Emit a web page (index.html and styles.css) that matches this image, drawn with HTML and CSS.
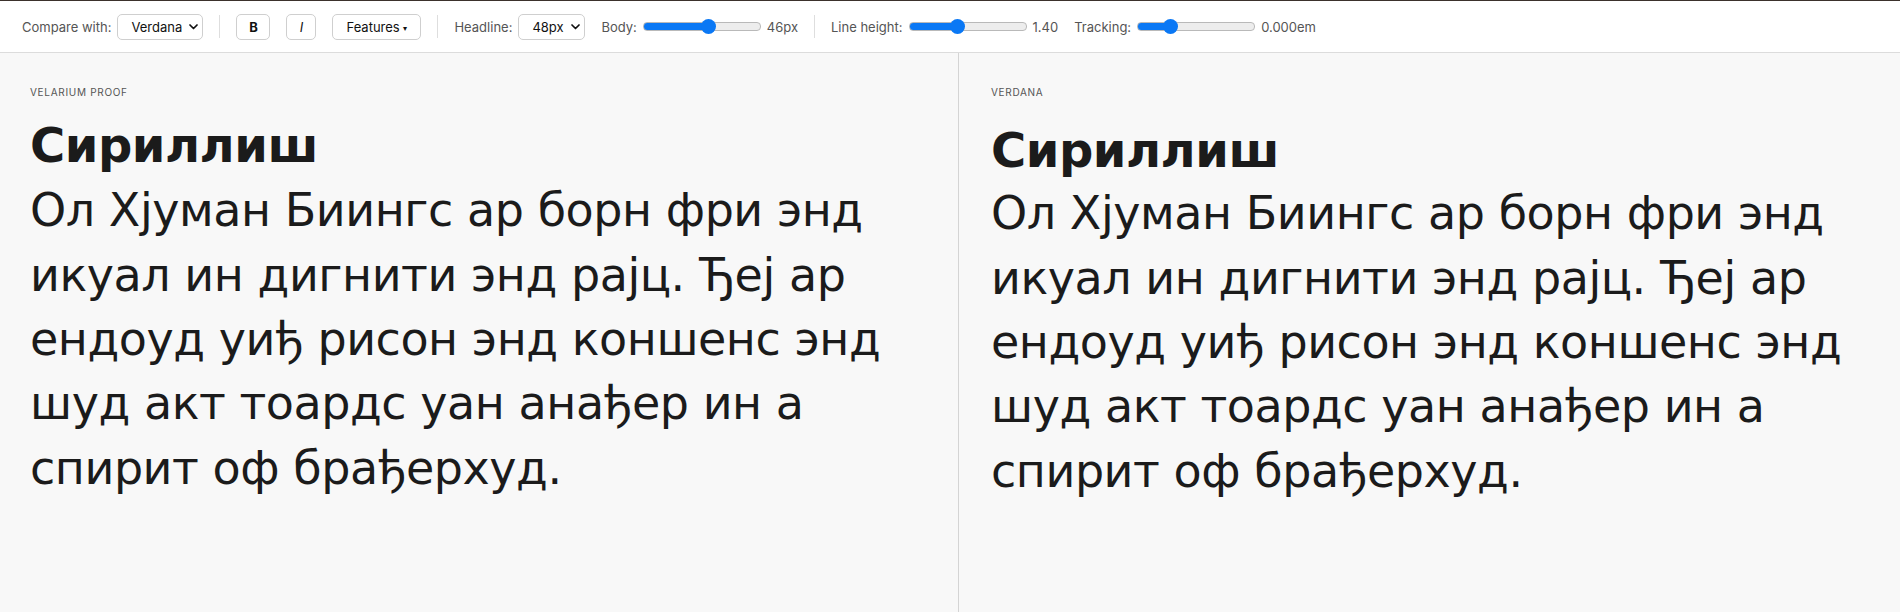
FILE: index.html
```html
<!DOCTYPE html>
<html lang="en">

<head>
    <meta charset="UTF-8">
    <meta name="viewport" content="width=device-width, initial-scale=1.0">
    <title>Velarium proof</title>
    <link rel="stylesheet" href="styles.css">
</head>

<body>
    <div class="toolbar">
        <label class="field">
            <span>Compare with:</span>
            <span class="select-wrap select-font">
                <select class="select">
                    <option>Verdana</option>
                </select>
                <svg class="chevron" width="9" height="6" viewBox="0 0 9 6"><polyline points="1,1 4.5,4.5 8,1" /></svg>
            </span>
        </label>
        <span class="divider"></span>
        <button class="btn btn-bold">B</button>
        <button class="btn btn-italic">I</button>
        <button class="btn btn-features">Features <span class="caret">&#9662;</span></button>
        <span class="divider"></span>
        <label class="field">
            <span>Headline:</span>
            <span class="select-wrap select-size">
                <select class="select">
                    <option>48px</option>
                </select>
                <svg class="chevron" width="9" height="6" viewBox="0 0 9 6"><polyline points="1,1 4.5,4.5 8,1" /></svg>
            </span>
        </label>
        <label class="field">
            <span>Body:</span>
            <input class="range" type="range" min="12" max="72" value="46" style="--fill: 60%">
            <span class="value">46px</span>
        </label>
        <span class="divider"></span>
        <label class="field">
            <span>Line height:</span>
            <input class="range" type="range" min="1" max="2" step="0.05" value="1.4" style="--fill: 40%">
            <span class="value">1.40</span>
        </label>
        <label class="field">
            <span>Tracking:</span>
            <input class="range" type="range" min="-0.05" max="0.15" step="0.005" value="0" style="--fill: 29%">
            <span class="value">0.000em</span>
        </label>
    </div>

    <main class="panes">
        <section class="pane">
            <div class="pane-label">Velarium Proof</div>
            <h1 class="headline">Сириллиш</h1>
            <p class="body-text">Ол Хјуман Биингс ар борн фри энд икуал ин дигнити энд рајц. Ђеј ар ендоуд уиђ рисон энд коншенс энд шуд акт тоардс уан анађер ин а спирит оф брађерхуд.</p>
        </section>
        <section class="pane pane-compare">
            <div class="pane-label">Verdana</div>
            <h1 class="headline">Сириллиш</h1>
            <p class="body-text">Ол Хјуман Биингс ар борн фри энд икуал ин дигнити энд рајц. Ђеј ар ендоуд уиђ рисон энд коншенс энд шуд акт тоардс уан анађер ин а спирит оф брађерхуд.</p>
        </section>
    </main>
</body>

</html>
```

FILE: styles.css
```css
html,
body {
    margin: 0;
    height: 100%;
}

body {
    display: flex;
    flex-direction: column;
    background-color: #f8f8f8;
    font-family: Inter, "Liberation Sans", sans-serif;
    overflow: hidden;
}

.toolbar {
    display: flex;
    align-items: center;
    gap: 16px;
    height: 51px;
    padding: 0 22px;
    background-color: #fff;
    border-top: 1px solid #3b312c;
    border-bottom: 1px solid #dcdcdc;
    font-size: 13px;
    color: #555;
    flex-shrink: 0;
}

.field {
    display: flex;
    align-items: center;
    gap: 6px;
}

.select-wrap {
    position: relative;
    display: inline-block;
}

.select {
    appearance: none;
    -webkit-appearance: none;
    height: 26px;
    margin: 0;
    padding: 0 18px 0 13px;
    border: 1px solid #cfcfcf;
    border-radius: 5px;
    background-color: #fff;
    font-family: inherit;
    font-size: 13px;
    color: #111;
}

.select-font .select {
    width: 86px;
}

.select-size .select {
    width: 67px;
}

.chevron {
    position: absolute;
    right: 5px;
    top: 10px;
    pointer-events: none;
}

.chevron polyline {
    fill: none;
    stroke: #111;
    stroke-width: 1.7;
    stroke-linecap: round;
    stroke-linejoin: round;
}

.divider {
    width: 1px;
    height: 23px;
    background-color: #dedede;
}

.btn {
    height: 26px;
    margin: 0;
    padding: 0 12px;
    border: 1px solid #cfcfcf;
    border-radius: 5px;
    background-color: #fff;
    font-family: inherit;
    font-size: 13px;
    color: #111;
}

.btn-bold {
    width: 34px;
    padding: 0;
    font-weight: 700;
}

.btn-italic {
    width: 30px;
    padding: 0;
    font-style: italic;
}

.btn-features {
    width: 89px;
    padding: 0;
}

.caret {
    font-size: 8px;
    vertical-align: 1px;
}

.range {
    -webkit-appearance: none;
    appearance: none;
    width: 116px;
    height: 7px;
    margin: 0;
    border: 1px solid #b9b9b9;
    border-radius: 4px;
    background: linear-gradient(to right, #0a78f5 var(--fill), #ededed var(--fill));
}

.range::-webkit-slider-thumb {
    -webkit-appearance: none;
    width: 15px;
    height: 15px;
    border-radius: 50%;
    background-color: #0a78f5;
}

.value {
    color: #555;
}

.panes {
    display: flex;
    flex: 1;
}

.pane {
    width: 958px;
    padding: 32px 30px;
    box-sizing: border-box;
}

.pane-compare {
    flex: 1;
    padding-left: 32px;
    border-left: 1px solid #d4d4d4;
}

.pane-label {
    font-size: 10px;
    line-height: 14px;
    letter-spacing: 0.7px;
    text-transform: uppercase;
    color: #555;
    margin-bottom: 18px;
}

.headline {
    margin: 0 0 5px 0;
    font-family: "DejaVu Sans", Verdana, sans-serif;
    font-size: 48px;
    font-weight: 700;
    line-height: 1.17;
    letter-spacing: -0.01em;
    color: #1b1b1b;
}

.pane-compare .headline {
    padding-top: 5px;
    margin-bottom: 3px;
}

.body-text {
    margin: 0;
    max-width: 900px;
    font-family: "DejaVu Sans", Verdana, sans-serif;
    font-size: 46px;
    line-height: 1.4;
    letter-spacing: -0.01em;
    color: #1b1b1b;
}
```
